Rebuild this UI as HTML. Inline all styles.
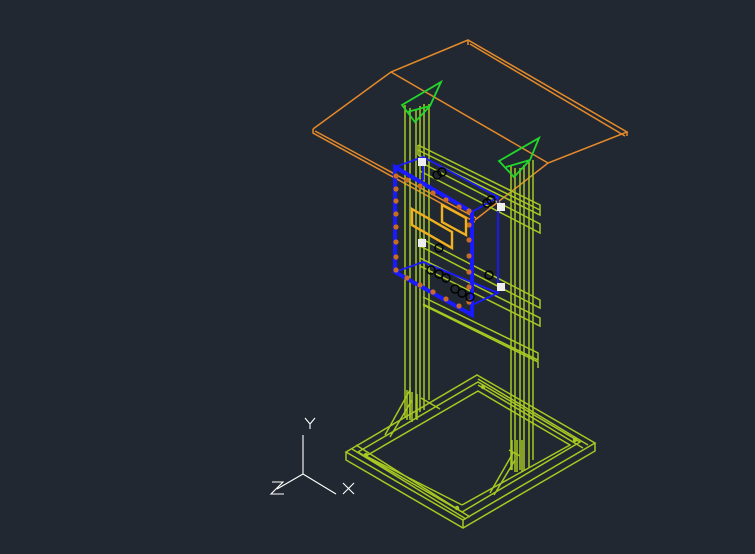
<!DOCTYPE html>
<html><head><meta charset="utf-8"><style>
html,body{margin:0;padding:0;background:#222831;}
svg{display:block}
</style></head><body>
<svg width="755" height="554" viewBox="0 0 755 554" xmlns="http://www.w3.org/2000/svg">
<rect width="755" height="554" fill="#222831"/>
<g stroke="#e58a2a" stroke-width="1.5" fill="none">
<path d="M313,129 L391,72 L468,40 L627,132 L548,163 L475,220"/>
<path d="M470,44 L625,136"/>
<path d="M313,129 L313,133 L475,222"/>
<path d="M315,131 L476,218"/>
<path d="M391,72 L548,163"/>
<path d="M468,40 L468,45"/><path d="M627,132 L627,136"/>
</g>
<g stroke="#a8c822" stroke-width="1.5" fill="none">
<path d="M405,105 V418 M410,108 V420 M416,110 V418 M420,106 V412 M424,104 V410 M429,104 V400"/>
<path d="M511,165 V470 M515,168 V472 M520,168 V470 M524,165 V470 M529,162 V468 M533,160 V460"/>
<path d="M418,145 L540,205 L540,215 L418,155 M418,150 L540,210"/>
<path d="M418,145 L418,155"/>
<path d="M420,162 L540,224 L540,233 L420,171"/>
<path d="M420,238 L540,300 L540,308 L420,246"/>
<path d="M420,258 L540,318 L540,326 L420,266"/>
<path d="M423,297 L538,353 L538,360 L423,304"/>
<path d="M423,305 L538,362 L538,368"/>
<path d="M346,452 L477,375 L595,443 L463,520 Z"/>
<path d="M346,452 L346,460 L463,528 L595,451 L595,443"/>
<path d="M463,520 L463,528"/>
<path d="M358,452 L478,382 L580,442 L462,512 Z"/>
<path d="M366,456 L478,391 L570,445 L462,505"/>
<path d="M366,456 L462,505"/>
<path d="M352,449 L466,519 M478,379 L588,445"/>
<path d="M356,445 L470,517 M478,385 L583,448"/>
<path d="M385,435 L410,390 L410,418 M390,437 L412,400"/>
<path d="M490,493 L513,453 M494,495 L515,460"/>
<path d="M421,398 L440,409 M509,450 L520,456"/>
<path d="M512,440 V470 M517,440 V472 M522,440 V472"/>
<path d="M407,390 V420 M412,392 V422 M417,394 V420"/>
</g>
<g fill="#a8c822"><circle cx="366" cy="455" r="2.2"/><circle cx="483" cy="387" r="2.2"/><circle cx="575" cy="440" r="2.2"/><circle cx="457" cy="508" r="2.2"/></g>
<g stroke="#22d82a" stroke-width="1.8" fill="none">
<path d="M402,105 L441,82 L430,106 L415,122 Z M407,112 L430,106"/>
<path d="M499,161 L539,138 L530,160 L514,177 Z M506,167 L530,160"/>
</g>
<g stroke="#1a1aff" fill="none">
<path d="M395,167 L472,212 L472,315 L395,272 Z" stroke-width="4"/>
<path d="M395,167 L423,157 L498,197 L472,212 M498,197 L498,293 L472,305 M423,157 L423,180 M395,272 L423,262 L498,293" stroke-width="1.8"/>
</g>
<g fill="#c86a28">
<circle cx="396" cy="176" r="2.6"/><circle cx="396" cy="189" r="2.6"/><circle cx="396" cy="201" r="2.6"/><circle cx="396" cy="214" r="2.6"/><circle cx="396" cy="227" r="2.6"/><circle cx="396" cy="242" r="2.6"/><circle cx="396" cy="257" r="2.6"/><circle cx="396" cy="270" r="2.6"/>
<circle cx="407" cy="180" r="2.6"/><circle cx="420" cy="186" r="2.6"/><circle cx="433" cy="193" r="2.6"/><circle cx="446" cy="200" r="2.6"/><circle cx="459" cy="207" r="2.6"/><circle cx="469" cy="211" r="2.6"/>
<circle cx="469" cy="225" r="2.6"/><circle cx="469" cy="240" r="2.6"/><circle cx="469" cy="256" r="2.6"/><circle cx="469" cy="272" r="2.6"/><circle cx="469" cy="287" r="2.6"/><circle cx="469" cy="302" r="2.6"/>
<circle cx="407" cy="278" r="2.6"/><circle cx="420" cy="285" r="2.6"/><circle cx="433" cy="292" r="2.6"/><circle cx="446" cy="299" r="2.6"/><circle cx="459" cy="306" r="2.6"/>
</g>
<g stroke="#f0b020" stroke-width="2.4" fill="none">
<path d="M412,209 L452,232 L452,248 L412,225 Z"/>
<path d="M442,205 L466,218 L466,235 L442,222 Z"/>
</g>
<g fill="#eee"><rect x="418" y="158" width="8" height="8"/><rect x="497" y="203" width="8" height="8"/><rect x="418" y="239" width="8" height="8"/><rect x="497" y="283" width="8" height="8"/></g>
<g stroke="#000" stroke-width="1.4" fill="none">
<circle cx="437" cy="175" r="4"/><circle cx="442" cy="172" r="4"/>
<circle cx="487" cy="203" r="4"/><circle cx="491" cy="200" r="4"/>
<circle cx="439" cy="248" r="4"/>
<circle cx="489" cy="275" r="4"/>
<circle cx="431" cy="270" r="4"/><circle cx="439" cy="274" r="4"/><circle cx="446" cy="278" r="4"/>
<circle cx="455" cy="289" r="4"/><circle cx="462" cy="293" r="4"/><circle cx="470" cy="297" r="4"/>
</g>
<g stroke="#fff" stroke-width="1.1" fill="none">
<path d="M303,474 V435 M303,474 L277,489 M303,474 L336,494"/>
<path d="M305,418 L310,424 L315,418 M310,424 V429"/>
<path d="M343,483 L354,494 M354,483 L343,494"/>
<path d="M272,482 H283 L271,494 H284"/>
</g>
</svg>
</body></html>
